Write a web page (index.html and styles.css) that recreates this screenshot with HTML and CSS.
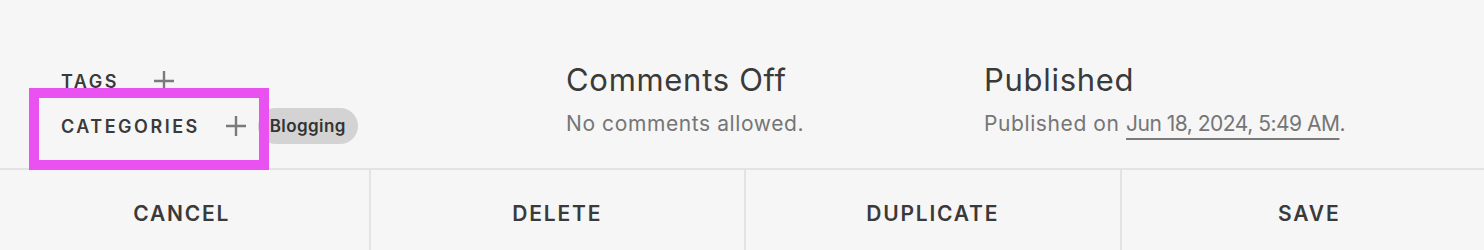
FILE: index.html
```html
<!DOCTYPE html>
<html>
<head>
<meta charset="utf-8">
<link rel="stylesheet" href="styles.css">
</head>
<body>
<div class="page">
  <div class="meta">
    <div class="col-taxonomy">
      <div class="tax-row tags-row">
        <span class="tax-label">TAGS</span>
        <span class="plus plus-tags"><svg width="20" height="20" viewBox="0 0 20 20"><path d="M10 0V20M0 10H20" stroke="#7a7a7a" stroke-width="2.4" fill="none"/></svg></span>
      </div>
      <div class="tax-row cats-row">
        <span class="tax-label">CATEGORIES</span>
        <span class="plus plus-cats"><svg width="20" height="20" viewBox="0 0 20 20"><path d="M10 0V20M0 10H20" stroke="#7a7a7a" stroke-width="2.4" fill="none"/></svg></span>
        <span class="pill">Blogging</span>
      </div>
    </div>
    <div class="col-info">
      <div class="info-title">Comments Off</div>
      <div class="info-sub">No comments allowed.</div>
    </div>
    <div class="col-info">
      <div class="info-title">Published</div>
      <div class="info-sub">Published on <span class="date">Jun 18, 2024, 5:49 AM</span>.</div>
    </div>
  </div>
  <div class="actions">
    <div class="action">CANCEL</div>
    <div class="action">DELETE</div>
    <div class="action">DUPLICATE</div>
    <div class="action">SAVE</div>
  </div>
  <div class="highlight"></div>
</div>
</body>
</html>
```
FILE: styles.css
```css
html, body {
  margin: 0;
  padding: 0;
  background: #f6f6f6;
}
body {
  width: 1484px;
  height: 250px;
  overflow: hidden;
  font-family: Inter, "Liberation Sans", sans-serif;
  color: #3a3a3a;
}
.page {
  position: relative;
  width: 1484px;
  height: 250px;
}
.meta {
  display: grid;
  grid-template-columns: 505px 418px 1fr;
  padding-left: 61px;
  box-sizing: border-box;
  border-bottom: 2px solid #e3e3e3;
  height: 170px;
}
.col-taxonomy {
  display: flex;
  flex-direction: column;
  padding-top: 70px;
}
.tax-row {
  display: flex;
  align-items: center;
}
.tags-row {
  height: 22px;
}
.cats-row {
  margin-top: 16px;
  height: 36px;
}
.tax-label {
  font-size: 18px;
  font-weight: 600;
  letter-spacing: 2.5px;
  color: #3a3a3a;
}
.plus {
  display: flex;
  width: 20px;
  height: 20px;
}
.plus-tags {
  margin-left: 35px;
}
.plus-cats {
  margin-left: 26px;
}
.pill {
  margin-left: 12px;
  height: 36px;
  line-height: 36px;
  padding: 0 12px 0 12px;
  border-radius: 18px;
  background: #d3d3d3;
  font-size: 17px;
  font-weight: 600;
  letter-spacing: 0.4px;
  color: #333;
}
.col-info {
  padding-top: 61px;
}
.info-title {
  font-size: 31px;
  line-height: 38px;
  letter-spacing: 0.7px;
  color: #3a3a3a;
}
.info-sub {
  margin-top: 12px;
  font-size: 21px;
  line-height: 26px;
  letter-spacing: 0.6px;
  color: #757575;
}
.date {
  letter-spacing: -0.5px;
  text-decoration: underline;
  text-decoration-thickness: 1.5px;
  text-decoration-color: #7a7a7a;
  text-underline-offset: 7px;
}
.actions {
  display: grid;
  grid-template-columns: repeat(4, 1fr);
  width: 1502px;
  margin-left: -5px;
  height: 80px;
}
.action {
  display: flex;
  align-items: center;
  justify-content: center;
  padding-top: 6px;
  box-sizing: border-box;
  border-right: 2px solid #e3e3e3;
  font-size: 21px;
  font-weight: 600;
  letter-spacing: 1.8px;
  color: #3a3a3a;
}
.action:last-child {
  border-right: none;
}
.highlight {
  position: absolute;
  left: 29px;
  top: 88px;
  width: 240px;
  height: 82px;
  box-sizing: border-box;
  border: 10px solid #e951f0;
}
```
